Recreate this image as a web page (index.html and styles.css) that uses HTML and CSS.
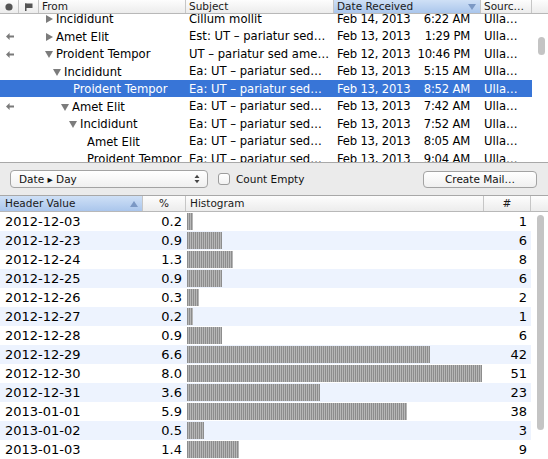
FILE: index.html
```html
<!DOCTYPE html>
<html>
<head>
<meta charset="utf-8">
<link rel="stylesheet" href="styles.css">
</head>
<body>
<div class="mail">
  <div class="mhead">
    <div class="hc ic"><svg width="8" height="8" viewBox="0 0 8 8"><circle cx="4" cy="4" r="3.6" fill="#555"/></svg></div>
    <div class="hc ic"><svg width="8" height="8" viewBox="0 0 8 8"><rect x="0" y="0.5" width="7.5" height="4.5" fill="#555"/><rect x="0" y="0.5" width="1.5" height="7.5" fill="#555"/></svg></div>
    <div class="hc">From</div>
    <div class="hc">Subject</div>
    <div class="hc sorted"><span>Date Received</span><span class="down"></span></div>
    <div class="hc">Sourc…</div>
    <div class="hc last"></div>
  </div>
  <div class="mbody">
    <div class="rows">
      <div class="row">
        <div class="c"></div><div class="c"></div>
        <div class="c from d0"><span class="tri r"></span><span>Incididunt</span></div>
        <div class="c subj">Cillum mollit</div>
        <div class="c date"><span>Feb 14, 2013</span><span>6:22 AM</span></div>
        <div class="c src">Ulla…</div>
      </div>
      <div class="row">
        <div class="c arr"><svg width="8" height="7" viewBox="0 0 8 7"><path d="M0 3.5 L3.6 0 L3.6 2.4 L8 2.4 L8 4.6 L3.6 4.6 L3.6 7 Z" fill="#7a7a7a"/></svg></div><div class="c"></div>
        <div class="c from d0"><span class="tri r"></span><span>Amet Elit</span></div>
        <div class="c subj">Est: UT – pariatur sed…</div>
        <div class="c date"><span>Feb 13, 2013</span><span>1:29 PM</span></div>
        <div class="c src">Ulla…</div>
      </div>
      <div class="row">
        <div class="c arr"><svg width="8" height="7" viewBox="0 0 8 7"><path d="M0 3.5 L3.6 0 L3.6 2.4 L8 2.4 L8 4.6 L3.6 4.6 L3.6 7 Z" fill="#7a7a7a"/></svg></div><div class="c"></div>
        <div class="c from d0"><span class="tri dn"></span><span>Proident Tempor</span></div>
        <div class="c subj">UT – pariatur sed ame…</div>
        <div class="c date"><span>Feb 12, 2013</span><span>10:46 PM</span></div>
        <div class="c src">Ulla…</div>
      </div>
      <div class="row">
        <div class="c"></div><div class="c"></div>
        <div class="c from d1"><span class="tri dn"></span><span>Incididunt</span></div>
        <div class="c subj">Ea: UT – pariatur sed…</div>
        <div class="c date"><span>Feb 13, 2013</span><span>5:15 AM</span></div>
        <div class="c src">Ulla…</div>
      </div>
      <div class="row sel">
        <div class="c"></div><div class="c"></div>
        <div class="c from d2"><span>Proident Tempor</span></div>
        <div class="c subj">Ea: UT – pariatur sed…</div>
        <div class="c date"><span>Feb 13, 2013</span><span>8:52 AM</span></div>
        <div class="c src">Ulla…</div>
      </div>
      <div class="row">
        <div class="c arr"><svg width="8" height="7" viewBox="0 0 8 7"><path d="M0 3.5 L3.6 0 L3.6 2.4 L8 2.4 L8 4.6 L3.6 4.6 L3.6 7 Z" fill="#7a7a7a"/></svg></div><div class="c"></div>
        <div class="c from d3"><span class="tri dn"></span><span>Amet Elit</span></div>
        <div class="c subj">Ea: UT – pariatur sed…</div>
        <div class="c date"><span>Feb 13, 2013</span><span>7:42 AM</span></div>
        <div class="c src">Ulla…</div>
      </div>
      <div class="row">
        <div class="c"></div><div class="c"></div>
        <div class="c from d4"><span class="tri dn"></span><span>Incididunt</span></div>
        <div class="c subj">Ea: UT – pariatur sed…</div>
        <div class="c date"><span>Feb 13, 2013</span><span>7:52 AM</span></div>
        <div class="c src">Ulla…</div>
      </div>
      <div class="row">
        <div class="c"></div><div class="c"></div>
        <div class="c from d5"><span>Amet Elit</span></div>
        <div class="c subj">Ea: UT – pariatur sed…</div>
        <div class="c date"><span>Feb 13, 2013</span><span>8:05 AM</span></div>
        <div class="c src">Ulla…</div>
      </div>
      <div class="row">
        <div class="c"></div><div class="c"></div>
        <div class="c from d5"><span>Proident Tempor</span></div>
        <div class="c subj">Ea: UT – pariatur sed…</div>
        <div class="c date"><span>Feb 13, 2013</span><span>9:04 AM</span></div>
        <div class="c src">Ulla…</div>
      </div>
    </div>
    <div class="vs top"><div class="thumb small"></div></div>
  </div>
</div>

<div class="toolbar">
  <div class="popup"><span>Date ▸ Day</span><svg width="6" height="10" viewBox="0 0 6 10"><path d="M0.5 4 L3 0.8 L5.5 4 Z M0.5 6 L3 9.2 L5.5 6 Z" fill="#444"/></svg></div>
  <div class="check"></div>
  <span class="clabel">Count Empty</span>
  <div class="button">Create Mail…</div>
</div>

<div class="hist">
  <div class="hhead">
    <div class="hh sorted"><span>Header Value</span><span class="up"></span></div>
    <div class="hh center">%</div>
    <div class="hh">Histogram</div>
    <div class="hh center">#</div>
    <div class="hh last"></div>
  </div>
  <div class="hbody">
    <div class="hrows">
      <div class="hrow"><div class="hv">2012-12-03</div><div class="pct">0.2</div><div class="hg"><div class="bar" style="width:5.8px"></div></div><div class="cnt">1</div></div>
      <div class="hrow"><div class="hv">2012-12-23</div><div class="pct">0.9</div><div class="hg"><div class="bar" style="width:34.7px"></div></div><div class="cnt">6</div></div>
      <div class="hrow"><div class="hv">2012-12-24</div><div class="pct">1.3</div><div class="hg"><div class="bar" style="width:46.2px"></div></div><div class="cnt">8</div></div>
      <div class="hrow"><div class="hv">2012-12-25</div><div class="pct">0.9</div><div class="hg"><div class="bar" style="width:34.7px"></div></div><div class="cnt">6</div></div>
      <div class="hrow"><div class="hv">2012-12-26</div><div class="pct">0.3</div><div class="hg"><div class="bar" style="width:11.6px"></div></div><div class="cnt">2</div></div>
      <div class="hrow"><div class="hv">2012-12-27</div><div class="pct">0.2</div><div class="hg"><div class="bar" style="width:5.8px"></div></div><div class="cnt">1</div></div>
      <div class="hrow"><div class="hv">2012-12-28</div><div class="pct">0.9</div><div class="hg"><div class="bar" style="width:34.7px"></div></div><div class="cnt">6</div></div>
      <div class="hrow"><div class="hv">2012-12-29</div><div class="pct">6.6</div><div class="hg"><div class="bar" style="width:242.8px"></div></div><div class="cnt">42</div></div>
      <div class="hrow"><div class="hv">2012-12-30</div><div class="pct">8.0</div><div class="hg"><div class="bar" style="width:294.8px"></div></div><div class="cnt">51</div></div>
      <div class="hrow"><div class="hv">2012-12-31</div><div class="pct">3.6</div><div class="hg"><div class="bar" style="width:132.9px"></div></div><div class="cnt">23</div></div>
      <div class="hrow"><div class="hv">2013-01-01</div><div class="pct">5.9</div><div class="hg"><div class="bar" style="width:219.6px"></div></div><div class="cnt">38</div></div>
      <div class="hrow"><div class="hv">2013-01-02</div><div class="pct">0.5</div><div class="hg"><div class="bar" style="width:17.3px"></div></div><div class="cnt">3</div></div>
      <div class="hrow"><div class="hv">2013-01-03</div><div class="pct">1.4</div><div class="hg"><div class="bar" style="width:52px"></div></div><div class="cnt">9</div></div>
    </div>
    <div class="vs bottom"><div class="thumb big"></div></div>
  </div>
</div>
</body>
</html>
```

FILE: styles.css
```css
* { box-sizing: border-box; }
html, body { margin: 0; padding: 0; }
body {
  width: 548px;
  height: 459px;
  overflow: hidden;
  background: #fff;
  font-family: "DejaVu Sans", "Noto Sans", sans-serif;
  color: #000;
}

/* ---------- mail list ---------- */
.mail {
  height: 163px;
  border-bottom: 1px solid #a8a8a8;
  display: flex;
  flex-direction: column;
}
.mhead {
  height: 14px;
  flex: none;
  display: grid;
  grid-template-columns: 19px 20px 147px 148px 147px 51px 16px;
  border-bottom: 1px solid #b8b8b8;
  background: linear-gradient(#fdfdfd, #ececec);
  font-size: 10.5px;
  line-height: 13px;
  color: #1a1a1a;
}
.hc {
  border-right: 1px solid #c6c6c6;
  padding-left: 3px;
  white-space: nowrap;
  overflow: hidden;
}
.hc.last { border-right: none; }
.hc.ic {
  display: flex;
  align-items: center;
  justify-content: center;
  padding-left: 0;
}
.sorted {
  background: linear-gradient(#cfe0f6, #aac6ec);
  display: flex;
  justify-content: space-between;
  align-items: center;
  padding-right: 4px;
}
.down {
  width: 0; height: 0;
  border-left: 4px solid transparent;
  border-right: 4px solid transparent;
  border-top: 6px solid #7b98c4;
}
.up {
  width: 0; height: 0;
  border-left: 4px solid transparent;
  border-right: 4px solid transparent;
  border-bottom: 6px solid #7b98c4;
}
.mbody {
  flex: 1;
  display: flex;
  overflow: hidden;
}
.rows {
  width: 532px;
  margin-top: -4.25px;
}
.row {
  display: grid;
  grid-template-columns: 19px 20px 147px 148px 147px 51px;
  height: 17.5px;
  font-size: 11.6px;
  line-height: 16px;
  padding-top: 1px;
}
.row.sel { background: #3875d7; color: #fff; }
.c {
  white-space: nowrap;
  overflow: hidden;
}
.arr {
  display: flex;
  align-items: center;
  padding-left: 6px;
}
.from {
  display: flex;
  align-items: center;
}
.d0 { padding-left: 5px; }
.d1 { padding-left: 13px; }
.d2 { padding-left: 34px; }
.d3 { padding-left: 21px; }
.d4 { padding-left: 29px; }
.d5 { padding-left: 48px; }
.tri {
  width: 10px;
  height: 16px;
  flex: none;
  position: relative;
  margin-right: 2px;
}
.tri.r::before {
  content: "";
  position: absolute;
  left: 2px;
  top: 4px;
  border-top: 4px solid transparent;
  border-bottom: 4px solid transparent;
  border-left: 7px solid #7c7c7c;
}
.tri.dn::before {
  content: "";
  position: absolute;
  left: 1px;
  top: 5px;
  border-left: 4px solid transparent;
  border-right: 4px solid transparent;
  border-top: 7px solid #7c7c7c;
}
.subj { padding-left: 3px; }
.date {
  display: flex;
  justify-content: space-between;
  padding-left: 3px;
  padding-right: 11px;
  letter-spacing: -0.2px;
}
.src { padding-left: 3px; }

.vs {
  flex: 1;
  background: #fff;
}
.vs.top { padding-top: 23px; padding-left: 6px; }
.vs.bottom { padding-top: 3px; padding-left: 6px; }
.thumb {
  width: 7px;
  border-radius: 4px;
  background: #c4c4c4;
}
.thumb.small { height: 18px; }
.thumb.big { height: 215px; }

/* ---------- toolbar ---------- */
.toolbar {
  height: 33px;
  background: #ebebeb;
  border-bottom: 1px solid #a8a8a8;
  display: flex;
  align-items: center;
  font-size: 10.5px;
  color: #111;
}
.popup {
  margin-left: 10px;
  width: 198px;
  height: 18px;
  border: 1px solid #a3a3a3;
  border-radius: 4px;
  background: linear-gradient(#ffffff, #f0f0f0);
  display: flex;
  align-items: center;
  justify-content: space-between;
  padding: 0 7px 0 8px;
}
.check {
  margin-left: 10px;
  width: 12px;
  height: 12px;
  border: 1px solid #9c9c9c;
  border-radius: 3px;
  background: linear-gradient(#ffffff, #f2f2f2);
}
.clabel { margin-left: 6px; }
.button {
  margin-left: auto;
  margin-right: 11px;
  width: 114px;
  height: 17px;
  border: 1px solid #a3a3a3;
  border-radius: 4px;
  background: linear-gradient(#ffffff, #f0f0f0);
  text-align: center;
  line-height: 15px;
}

/* ---------- histogram ---------- */
.hist { display: flex; flex-direction: column; }
.hhead {
  height: 16px;
  display: grid;
  grid-template-columns: 143px 43px 298px 47px 17px;
  border-bottom: 1px solid #b8b8b8;
  background: linear-gradient(#fdfdfd, #ececec);
  font-size: 10.5px;
  line-height: 15px;
  color: #1a1a1a;
}
.hh {
  border-right: 1px solid #c6c6c6;
  padding-left: 4px;
  white-space: nowrap;
}
.hh.sorted { padding-left: 5px; padding-right: 4px; }
.hh.center { text-align: center; padding-left: 0; }
.hh.last { border-right: none; }
.hbody { display: flex; height: 247px; overflow: hidden; }
.hrows { width: 531px; }
.hrow {
  display: grid;
  grid-template-columns: 143px 43px 298px 47px;
  height: 19px;
  font-size: 13px;
  line-height: 18px;
}
.hrow:nth-child(even) { background: #edf3fe; }
.hv, .pct, .cnt { padding-top: 1px; }
.hv { padding-left: 5px; }
.pct { text-align: right; padding-right: 4px; }
.hg { padding-left: 1px; }
.bar {
  height: 17px;
  margin-top: 1px;
  background: repeating-linear-gradient(90deg, #8d8d8d 0 1px, #b7b7b7 1px 2px);
}
.cnt { text-align: right; padding-right: 4px; }
```
